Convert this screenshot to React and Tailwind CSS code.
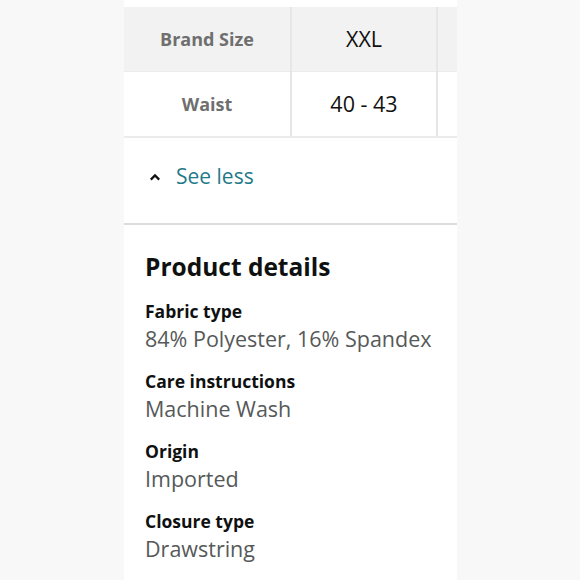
import React from "react";

const details = [
  { label: "Fabric type", value: "84% Polyester, 16% Spandex" },
  { label: "Care instructions", value: "Machine Wash" },
  { label: "Origin", value: "Imported" },
  { label: "Closure type", value: "Drawstring" },
];

const App = () => (
  <div
    className="w-[580px] h-[580px] overflow-hidden bg-[#f8f8f8]"
    style={{ fontFamily: '"Open Sans", "Noto Sans", sans-serif' }}
  >
    <div className="ml-[124px] w-[333px] h-full bg-white pt-[7px]">
      {/* size table */}
      <div className="grid grid-cols-[166px_2px_144px_2px_1fr]">
        <div className="h-[64px] bg-[#f2f2f2] flex items-center justify-center font-bold text-[18px] text-[#6f6f6f]">
          Brand Size
        </div>
        <div className="bg-[#e6e6e6]" />
        <div className="h-[64px] bg-[#f2f2f2] flex items-center justify-center text-[21.5px] text-[#111]">
          XXL
        </div>
        <div className="bg-[#e6e6e6]" />
        <div className="bg-[#f2f2f2]" />

        <div className="h-[65px] border-t border-[#ebebeb] flex items-center justify-center font-bold text-[18px] text-[#6f6f6f]">
          Waist
        </div>
        <div className="bg-[#e6e6e6]" />
        <div className="h-[65px] border-t border-[#ebebeb] flex items-center justify-center text-[21.5px] text-[#111]">
          40 - 43
        </div>
        <div className="bg-[#e6e6e6]" />
        <div className="border-t border-[#ebebeb]" />
      </div>
      <div className="h-[2px] bg-[#ebebeb]" />

      {/* see less */}
      <div className="h-[85px] flex items-center pb-[8px]">
        <div className="flex items-center pl-[25px] gap-[15px]">
          <svg width="12" height="8" viewBox="0 0 12 8" className="mt-[1px]">
            <path d="M1.8 6.6 L6 2.4 L10.2 6.6" fill="none" stroke="#111" strokeWidth="2.2" />
          </svg>
          <span className="text-[21px] text-[#1f7a89]">See less</span>
        </div>
      </div>
      <div className="h-[2px] bg-[#dcdcdc]" />

      {/* product details */}
      <div className="pl-[21px] pt-[26px]">
        <h2 className="text-[24.5px] font-bold text-[#0f1111] leading-[32px]">
          Product details
        </h2>
        <div className="mt-[14px] flex flex-col gap-[14px]">
          {details.map((d) => (
            <div key={d.label} className="flex flex-col">
              <div className="text-[17.5px] font-bold text-[#0f1111] leading-[28px]">
                {d.label}
              </div>
              <div className="text-[21.5px] text-[#565959] leading-[28px]">
                {d.value}
              </div>
            </div>
          ))}
        </div>
      </div>
    </div>
  </div>
);

export default App;
